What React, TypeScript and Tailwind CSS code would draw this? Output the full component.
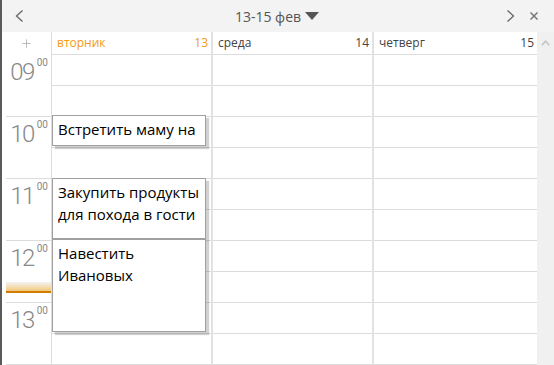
import { Plus } from "lucide-react"

const hours = ["09", "10", "11", "12", "13", ""]
const slots = Array.from({ length: 12 })

const days = [
    { name: "вторник", num: "13", today: true, width: "w-[161px]" },
    { name: "среда", num: "14", today: false, width: "w-[161px]" },
    { name: "четверг", num: "15", today: false, width: "w-[163px]" },
]

const events = [
    { text: "Встретить маму на", top: "top-[60px]", height: "h-[31px]" },
    { text: "Закупить продукты для похода в гости", top: "top-[123px]", height: "h-[61px]" },
    { text: "Навестить Ивановых", top: "top-[184px]", height: "h-[93px]" },
]

function App() {
    return (
        <div className="w-[554px] h-[365px] overflow-hidden bg-white border-l-2 border-[#5a5a5a] flex flex-col font-['Open_Sans',sans-serif]">
            <div className="h-[32px] shrink-0 bg-[#f3f3f3] grid grid-cols-[1fr_auto_1fr] items-center">
                <div className="pl-[13px]">
                    <svg width="9" height="12" viewBox="0 0 9 12">
                        <path d="M7.5 0.5 L1.5 6 L7.5 11.5" fill="none" stroke="#666" strokeWidth="1.3" />
                    </svg>
                </div>
                <div className="flex items-center gap-[4px] text-[14px] text-[#555] -ml-[2px]">
                    <span>13-15 фев</span>
                    <svg width="14" height="8" viewBox="0 0 14 8">
                        <path d="M0 0 L14 0 L7 8 Z" fill="#555" />
                    </svg>
                </div>
                <div className="flex items-center justify-end gap-[15px] pr-[16px]">
                    <svg width="9" height="12" viewBox="0 0 9 12">
                        <path d="M1.5 0.5 L7.5 6 L1.5 11.5" fill="none" stroke="#666" strokeWidth="1.3" />
                    </svg>
                    <svg width="8" height="8" viewBox="0 0 8 8">
                        <path d="M0.5 0.5 L7.5 7.5 M7.5 0.5 L0.5 7.5" fill="none" stroke="#777" strokeWidth="1.5" />
                    </svg>
                </div>
            </div>

            <div className="flex flex-1 min-h-0">
                <div className="w-[50px] shrink-0 border-r border-[#dcdcdc] flex flex-col">
                    <div className="h-[23px] shrink-0 flex items-center justify-center text-[#999]">
                        <Plus size={13} strokeWidth={1.2} />
                    </div>
                    {hours.map((h, k) => (
                        <div key={k} className="relative h-[62px] shrink-0 ml-[4px] border-b border-[#dcdcdc] flex justify-end items-start pr-[3px] pt-[3px] text-[#888]">
                            {h && (
                                <>
                                    <span className="mt-[2px] text-[24px] leading-none font-light tracking-[-1.5px] font-['Roboto',sans-serif]">{h}</span>
                                    <span className="ml-[3px] text-[10px] leading-none font-['Roboto',sans-serif]">00</span>
                                </>
                            )}
                            {h === "12" && (
                                <div className="absolute left-0 right-0 top-[41px] h-[11px] bg-gradient-to-b from-[#f2f2f2] to-[#f3c978] border-b-2 border-[#d47c00]" />
                            )}
                        </div>
                    ))}
                </div>

                {days.map((d, i) => (
                    <div key={d.name} className={`${d.width} shrink-0 flex flex-col ${i < 2 ? "border-r-2 border-[#e2e2e2]" : ""}`}>
                        <div className={`h-[23px] shrink-0 border-b border-[#dcdcdc] flex items-center justify-between pl-[5px] pr-[3px] text-[12px] ${d.today ? "text-[#f39a12]" : "text-[#444]"}`}>
                            <span>{d.name}</span>
                            <span>{d.num}</span>
                        </div>
                        <div className="relative flex flex-col">
                            {slots.map((_, k) => (
                                <div key={k} className="h-[31px] shrink-0 border-b border-[#dcdcdc]" />
                            ))}
                            {i === 0 && events.map((e) => (
                                <div key={e.text} className={`absolute left-0 w-[154px] ${e.top} ${e.height} bg-white border border-[#a0a0a0] shadow-[3px_3px_1px_rgba(0,0,0,0.18)] px-[5px] pt-[2px] text-[15px] leading-[22px] text-black`}>
                                    {e.text}
                                </div>
                            ))}
                        </div>
                    </div>
                ))}

                <div className="w-[17px] shrink-0 bg-[#f0f0f0] flex justify-center pt-[8px]">
                    <svg width="9" height="6" viewBox="0 0 9 6">
                        <path d="M0.8 5.2 L4.5 1.2 L8.2 5.2" fill="none" stroke="#c4c4c4" strokeWidth="1.6" />
                    </svg>
                </div>
            </div>
        </div>
    )
}

export default App
